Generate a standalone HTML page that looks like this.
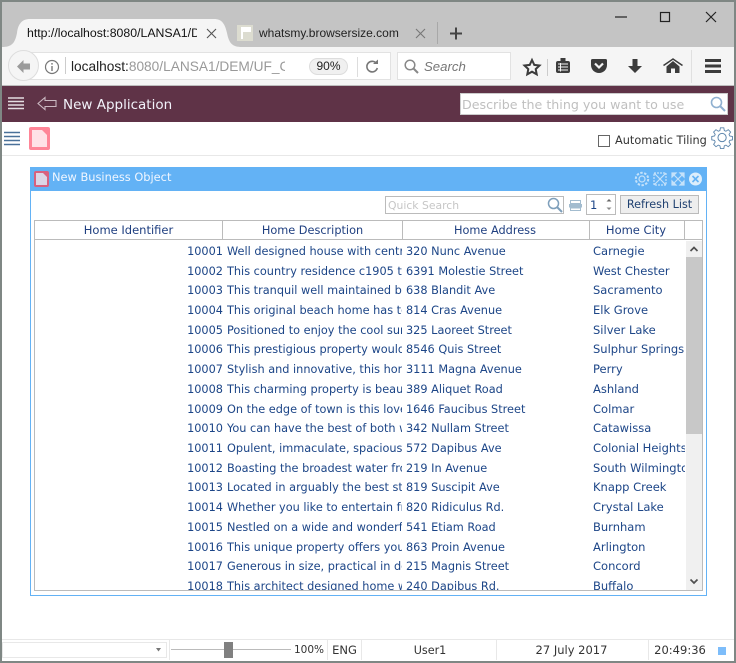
<!DOCTYPE html>
<html><head><meta charset="utf-8"><style>
*{box-sizing:border-box}
html,body{margin:0;padding:0;background:#fff}
#r{position:relative;width:736px;height:663px;overflow:hidden;background:#fff;font-family:"DejaVu Sans",sans-serif;font-size:11.500px}
.a{position:absolute}
.t{position:absolute;white-space:nowrap;overflow:hidden}
svg{position:absolute;overflow:visible}
.row{position:absolute;left:0;height:19px;line-height:19px;color:#1c4587;white-space:nowrap;font-size:11.300px}
.row span{position:absolute;top:0;overflow:hidden;white-space:nowrap}
.row span:last-child{font-size:11.500px}
.h{position:absolute;top:221px;height:19px;line-height:19px;text-align:center;color:#1f3f80;border-right:1px solid #bbb}
.st{position:absolute;top:640px;height:20px;line-height:21px;color:#333;text-align:center}
.sd{position:absolute;top:640px;width:1px;height:20px;background:#e8e8e8}
</style></head><body><div id="r">

<!-- browser chrome -->
<div class="a" style="left:0;top:0;width:736px;height:47px;background:#c4c4c4"></div>
<svg style="left:0;top:0" width="736" height="50">
<path d="M2 47C12 47 15 43 17 33C18 24 22 19 30 19H214C222 19 225 24 227 33C229 43 232 47 242 47Z" fill="#f5f5f5"/>
<rect x="237" y="25" width="16" height="16" fill="#dcdcd0"/><path d="M243 32h8v-5h-10v12h2z" fill="#fff"/>
<path d="M207 29l9 9M216 29l-9 9" stroke="#555" stroke-width="1.100" fill="none"/>
<path d="M416 29l9 9M425 29l-9 9" stroke="#777" stroke-width="1.100" fill="none"/>
<path d="M437.500 22v22" stroke="#a8a8a8"/>
<path d="M450 33.500h12M456 27.500v12" stroke="#444" stroke-width="2" fill="none"/>
<path d="M615 17h12" stroke="#222" stroke-width="1.200"/>
<rect x="660.500" y="12.500" width="9" height="9" fill="none" stroke="#222" stroke-width="1.200"/>
<path d="M706 12l10 10M716 12l-10 10" stroke="#222" stroke-width="1.200" fill="none"/>
</svg>
<div class="t" style="left:27px;top:24px;width:170px;height:18px;line-height:18px;font-family:'Liberation Sans',sans-serif;font-size:12.300px;color:#111">http://localhost:8080/LANSA1/D</div>
<div class="t" style="left:259px;top:24px;width:150px;height:18px;line-height:18px;font-family:'Liberation Sans',sans-serif;font-size:12px;color:#222">whatsmy.browsersize.com</div>

<!-- nav bar -->
<div class="a" style="left:0;top:47px;width:736px;height:39px;background:#f5f5f5;border-bottom:1px solid #bdbdbd"></div>
<div class="a" style="left:22px;top:52px;width:369px;height:28px;background:#fff;border:1px solid #e2e2e2"></div>
<div class="a" style="left:8px;top:50px;width:31px;height:31px;border-radius:50%;background:#f5f5f5;border:1px solid #ddd"></div>
<svg style="left:0;top:47px" width="736" height="39">
<path d="M23.500 13L17 19.500 23.500 26V22.500H30V16.500H23.500z" fill="#9b9b9b"/>
<circle cx="52" cy="20" r="6.500" fill="none" stroke="#777" stroke-width="1.200"/>
<path d="M52 19v5M52 16v1.600" stroke="#777" stroke-width="1.400"/>
<path d="M65.500 10v17" stroke="#ccc"/>
</svg>
<div class="t" style="left:71px;top:57px;width:214px;height:20px;line-height:20px;font-family:'Liberation Sans',sans-serif;font-size:13.700px;color:#999"><span style="color:#222">localhost:</span>8080/LANSA1/DEM/UF_C</div>
<div class="a" style="left:309px;top:58px;width:39px;height:17px;border-radius:9px;background:#f0f0f0;border:1px solid #ddd;text-align:center;line-height:15px;font-family:'Liberation Sans',sans-serif;font-size:12px;color:#222">90%</div>
<div class="a" style="left:357px;top:57px;width:1px;height:20px;background:#ddd"></div>
<svg style="left:364px;top:59px" width="16" height="16"><path d="M12.500 4.500A5.300 5.300 0 1 0 13.300 9" fill="none" stroke="#777" stroke-width="1.600"/><path d="M9 5h5V0.500z" fill="#777"/></svg>
<div class="a" style="left:397px;top:52px;width:114px;height:28px;background:#fff;border:1px solid #e2e2e2"></div>
<svg style="left:404px;top:59px" width="16" height="16"><circle cx="6" cy="6" r="4.800" fill="none" stroke="#888" stroke-width="1.500"/><path d="M9.500 9.500l4.500 4.500" stroke="#888" stroke-width="2"/></svg>
<div class="t" style="left:424px;top:57px;width:70px;height:20px;line-height:20px;font-family:'Liberation Sans',sans-serif;font-style:italic;font-size:13.200px;color:#777">Search</div>
<svg style="left:520px;top:47px" width="216" height="39">
<path d="M12 13l2.300 4.900 5.200.6-3.800 3.600 1 5.200-4.700-2.600-4.700 2.600 1-5.200-3.800-3.600 5.200-.6z" fill="none" stroke="#3c3c3c" stroke-width="2"/>
<path d="M27.500 12v17" stroke="#ccc"/>
<rect x="36" y="14" width="14" height="12" rx="2" fill="#3c3c3c"/><rect x="40.500" y="11" width="5" height="4" fill="#3c3c3c"/>
<path d="M38 17h10M38 20h10M38 23h10" stroke="#f5f5f5" stroke-width="1"/><path d="M40.500 16v8.500" stroke="#f5f5f5"/>
<path d="M72.500 12h13a1.500 1.500 0 0 1 1.500 1.500v4.500c0 4.500-3.500 8-8 8s-8-3.500-8-8v-4.500A1.500 1.500 0 0 1 72.500 12z" fill="#3c3c3c"/>
<path d="M75 16.500l4 4 4-4" fill="none" stroke="#f5f5f5" stroke-width="2.200"/>
<path d="M111.500 12h5v7h4.500l-7 7-7-7h4.500z" fill="#3c3c3c" transform="translate(1 0)"/>
<path d="M146.500 19.500l6.500-5.500 6.500 5.500v6.500h-4.500v-4.500h-4v4.500h-4.500z" fill="#3c3c3c"/>
<path d="M143.500 18.500l9.500-6.500 9.500 6.500" fill="none" stroke="#3c3c3c" stroke-width="1.500"/>
<path d="M171.500 3v33" stroke="#e0e0e0"/>
<path d="M185 13.500h16M185 19h16M185 24.500h16" stroke="#3c3c3c" stroke-width="3"/>
</svg>

<!-- app bar -->
<div class="a" style="left:0;top:86px;width:736px;height:36px;background:#5f3347"></div>
<svg style="left:0;top:86px" width="120" height="36">
<path d="M8 12h16M8 15.500h16M8 19h16M8 22.500h16" stroke="#e4dde1" stroke-width="1.500"/>
<path d="M45 11.500l-7 6 7 6v-3h11v-6h-11z" fill="none" stroke="#cbb9c2" stroke-width="1.100"/>
</svg>
<div class="t" style="left:63px;top:95px;width:130px;height:20px;line-height:20px;font-size:13.500px;color:#f2f2fa">New Application</div>
<div class="a" style="left:460px;top:93px;width:268px;height:22px;background:#fff;border:1px solid #ccc"></div>
<div class="t" style="left:462px;top:95px;width:240px;height:20px;line-height:20px;font-size:12.650px;color:#bfbfbf">Describe the thing you want to use</div>
<svg style="left:710px;top:96px" width="16" height="16"><circle cx="6.500" cy="6.500" r="5" fill="none" stroke="#8fb0d0" stroke-width="1.600"/><path d="M10 10l5 5" stroke="#8fb0d0" stroke-width="2"/></svg>

<!-- toolbar -->
<svg style="left:0;top:122px" width="60" height="34">
<path d="M4 10.500h16M4 14.500h16M4 18.500h16M4 22.500h16" stroke="#4a7199" stroke-width="1.500"/>
<rect x="29" y="5" width="21" height="23" rx="2" fill="#ff8597"/>
<path d="M32 8h10l5 5v12h-15z" fill="#ffe1e6"/>
</svg>
<div class="a" style="left:2px;top:155px;width:732px;height:1px;background:#e8e8e8"></div>
<div class="a" style="left:598px;top:135px;width:12px;height:12px;border:1px solid #666;background:#fff"></div>
<div class="t" style="left:615px;top:132px;width:95px;height:18px;line-height:18px;font-size:11.300px;color:#333">Automatic Tiling</div>
<svg style="left:712px;top:127px" width="22" height="22" viewBox="0 0 24 24"><path d="M10 1.500h4l.6 3.300 1.900.8 2.800-1.900 2.800 2.800-1.900 2.800.8 1.900 3.300.6v4l-3.300.6-.8 1.900 1.900 2.800-2.800 2.800-2.800-1.900-1.900.8-.6 3.300h-4l-.6-3.300-1.900-.8-2.800 1.900-2.800-2.800 1.900-2.800-.8-1.900-3.300-.6v-4l3.300-.6.8-1.900-1.900-2.800 2.800-2.800 2.800 1.900 1.900-.8z" transform="translate(0 -.5) scale(.92)" fill="none" stroke="#5f87ad" stroke-width="1.100"/><circle cx="11" cy="11.500" r="4.500" fill="none" stroke="#5f87ad" stroke-width="1.100"/></svg>

<!-- window -->
<div class="a" style="left:30px;top:167px;width:677px;height:429px;border:1px solid #63b2f5;background:#fff"></div>
<div class="a" style="left:30px;top:167px;width:677px;height:24px;background:#63b2f5"></div>
<svg style="left:30px;top:167px" width="30" height="24"><rect x="4" y="4" width="15" height="16" rx="2" fill="#d8617f"/><path d="M6 6h7l4 4v8h-11z" fill="#dcd6e6"/></svg>
<div class="t" style="left:52px;top:169px;width:130px;height:16px;line-height:16px;font-size:11.400px;color:#f0f6ff">New Business Object</div>
<svg style="left:632px;top:170px" width="72" height="18">
<g fill="none" stroke="#c5e2fa" stroke-width="1.200">
<circle cx="10" cy="9" r="3"/><circle cx="10" cy="9" r="6.200" stroke-dasharray="2.400 1.500" stroke-width="2"/>
<rect x="22" y="3" width="12" height="12" stroke-dasharray="2 1"/><path d="M22 3l12 12M34 3l-12 12"/>
<path d="M40 3h4l-4 4zM52 3h-4l4 4zM40 15h4l-4-4zM52 15h-4l4-4z" fill="#c5e2fa"/><path d="M42 5l8 8M50 5l-8 8"/>
</g>
<circle cx="63.500" cy="9" r="6.500" fill="#dceefc"/><path d="M60.500 6l6 6M66.500 6l-6 6" stroke="#63b2f5" stroke-width="1.600"/>
</svg>

<!-- search row -->
<div class="a" style="left:385px;top:196px;width:179px;height:18px;border:1px solid #bbb;background:#fff"></div>
<div class="t" style="left:388px;top:198px;width:150px;height:16px;line-height:16px;font-size:10.800px;color:#c6c6c6">Quick Search</div>
<svg style="left:547px;top:197px" width="16" height="16"><circle cx="6.500" cy="6.500" r="5" fill="none" stroke="#7e9fbb" stroke-width="1.500"/><path d="M10 10l5 5" stroke="#7e9fbb" stroke-width="2"/></svg>
<svg style="left:569px;top:199px" width="13" height="13"><rect x="1.500" y="1.500" width="10" height="3" fill="none" stroke="#a3bccf"/><rect x="0" y="5" width="13" height="3.500" fill="#a3bccf"/><rect x="1.500" y="9" width="10" height="2.500" fill="none" stroke="#a3bccf"/></svg>
<div class="a" style="left:586px;top:194px;width:30px;height:21px;border:1px solid #bbb;background:#fff"></div>
<div class="t" style="left:590px;top:196px;width:12px;height:18px;line-height:18px;font-size:11.500px;color:#1c4587">1</div>
<svg style="left:604px;top:197px" width="10" height="16"><path d="M2.500 4.500l2.500-2.500 2.500 2.500z" fill="#666"/><path d="M2.500 10.500h5l-2.500 2.500z" fill="#888"/></svg>
<div class="a" style="left:620px;top:195px;width:79px;height:19px;border:1px solid #bbb;background:#eee;text-align:center;line-height:18px;color:#1f4070;font-size:11.200px">Refresh List</div>

<!-- table -->
<div class="a" style="left:34px;top:220px;width:669px;height:371px;border:1px solid #bbb;background:#fff;overflow:hidden"></div>
<div class="a" style="left:35px;top:239px;width:667px;height:1px;background:#bbb"></div>
<div class="h" style="left:35px;width:188px">Home Identifier</div>
<div class="h" style="left:223px;width:180px;font-size:11.300px">Home Description</div>
<div class="h" style="left:403px;width:187px;font-size:11.300px;padding-right:2px">Home Address</div>
<div class="h" style="left:590px;width:95px;padding-right:2px">Home City</div>

<div class="a" style="left:35px;top:241px;width:651px;height:349px;overflow:hidden">
<div class="row" style="top:1px"><span style="left:0;width:188px;text-align:right">10001</span><span style="left:192px;width:175px">Well designed house with central heating</span><span style="left:371px;width:185px">320 Nunc Avenue</span><span style="left:558px;width:92px">Carnegie</span></div>
<div class="row" style="top:20.700px"><span style="left:0;width:188px;text-align:right">10002</span><span style="left:192px;width:175px">This country residence c1905 t</span><span style="left:371px;width:185px">6391 Molestie Street</span><span style="left:558px;width:92px">West Chester</span></div>
<div class="row" style="top:40.400px"><span style="left:0;width:188px;text-align:right">10003</span><span style="left:192px;width:175px">This tranquil well maintained beach</span><span style="left:371px;width:185px">638 Blandit Ave</span><span style="left:558px;width:92px">Sacramento</span></div>
<div class="row" style="top:60.100px"><span style="left:0;width:188px;text-align:right">10004</span><span style="left:192px;width:175px">This original beach home has to be</span><span style="left:371px;width:185px">814 Cras Avenue</span><span style="left:558px;width:92px">Elk Grove</span></div>
<div class="row" style="top:79.800px"><span style="left:0;width:188px;text-align:right">10005</span><span style="left:192px;width:175px">Positioned to enjoy the cool summer</span><span style="left:371px;width:185px">325 Laoreet Street</span><span style="left:558px;width:92px">Silver Lake</span></div>
<div class="row" style="top:99px"><span style="left:0;width:188px;text-align:right">10006</span><span style="left:192px;width:175px">This prestigious property would be</span><span style="left:371px;width:185px">8546 Quis Street</span><span style="left:558px;width:92px">Sulphur Springs</span></div>
<div class="row" style="top:119.200px"><span style="left:0;width:188px;text-align:right">10007</span><span style="left:192px;width:175px">Stylish and innovative, this home is</span><span style="left:371px;width:185px">3111 Magna Avenue</span><span style="left:558px;width:92px">Perry</span></div>
<div class="row" style="top:138.900px"><span style="left:0;width:188px;text-align:right">10008</span><span style="left:192px;width:175px">This charming property is beautiful</span><span style="left:371px;width:185px">389 Aliquet Road</span><span style="left:558px;width:92px">Ashland</span></div>
<div class="row" style="top:158.600px"><span style="left:0;width:188px;text-align:right">10009</span><span style="left:192px;width:175px">On the edge of town is this lovely</span><span style="left:371px;width:185px">1646 Faucibus Street</span><span style="left:558px;width:92px">Colmar</span></div>
<div class="row" style="top:178.300px"><span style="left:0;width:188px;text-align:right">10010</span><span style="left:192px;width:175px">You can have the best of both worlds</span><span style="left:371px;width:185px">342 Nullam Street</span><span style="left:558px;width:92px">Catawissa</span></div>
<div class="row" style="top:198px"><span style="left:0;width:188px;text-align:right">10011</span><span style="left:192px;width:175px">Opulent, immaculate, spacious and</span><span style="left:371px;width:185px">572 Dapibus Ave</span><span style="left:558px;width:92px">Colonial Heights</span></div>
<div class="row" style="top:217.700px"><span style="left:0;width:188px;text-align:right">10012</span><span style="left:192px;width:175px">Boasting the broadest water frontage</span><span style="left:371px;width:185px">219 In Avenue</span><span style="left:558px;width:92px">South Wilmington</span></div>
<div class="row" style="top:237.400px"><span style="left:0;width:188px;text-align:right">10013</span><span style="left:192px;width:175px">Located in arguably the best street</span><span style="left:371px;width:185px">819 Suscipit Ave</span><span style="left:558px;width:92px">Knapp Creek</span></div>
<div class="row" style="top:257.100px"><span style="left:0;width:188px;text-align:right">10014</span><span style="left:192px;width:175px">Whether you like to entertain friends</span><span style="left:371px;width:185px">820 Ridiculus Rd.</span><span style="left:558px;width:92px">Crystal Lake</span></div>
<div class="row" style="top:276.800px"><span style="left:0;width:188px;text-align:right">10015</span><span style="left:192px;width:175px">Nestled on a wide and wonderful block</span><span style="left:371px;width:185px">541 Etiam Road</span><span style="left:558px;width:92px">Burnham</span></div>
<div class="row" style="top:296.500px"><span style="left:0;width:188px;text-align:right">10016</span><span style="left:192px;width:175px">This unique property offers you the</span><span style="left:371px;width:185px">863 Proin Avenue</span><span style="left:558px;width:92px">Arlington</span></div>
<div class="row" style="top:316.200px"><span style="left:0;width:188px;text-align:right">10017</span><span style="left:192px;width:175px">Generous in size, practical in design</span><span style="left:371px;width:185px">215 Magnis Street</span><span style="left:558px;width:92px">Concord</span></div>
<div class="row" style="top:335.900px"><span style="left:0;width:188px;text-align:right">10018</span><span style="left:192px;width:175px">This architect designed home with</span><span style="left:371px;width:185px">240 Dapibus Rd.</span><span style="left:558px;width:92px">Buffalo</span></div>
</div>

<!-- scrollbar -->
<div class="a" style="left:686px;top:241px;width:16px;height:349px;background:#f0f0f0"></div>
<div class="a" style="left:686px;top:257px;width:16px;height:177px;background:#c8c8c8"></div>
<svg style="left:686px;top:241px" width="16" height="349"><path d="M4.500 10l3.500-3.500 3.500 3.500" fill="none" stroke="#505050" stroke-width="1.700"/><path d="M4.500 338.500l3.500 3.500 3.500-3.500" fill="none" stroke="#505050" stroke-width="1.700"/></svg>

<!-- status bar -->
<div class="a" style="left:2px;top:639px;width:732px;height:1px;background:#e8e8e8"></div>
<div class="a" style="left:2px;top:642px;width:165px;height:16px;border:1px solid #e8e8e8;background:#fff"></div>
<svg style="left:155px;top:647px" width="8" height="6"><path d="M1 1h5l-2.500 3.500z" fill="#777"/></svg>
<div class="sd" style="left:169px"></div>
<div class="a" style="left:171px;top:649px;width:120px;height:1px;background:#bbb"></div>
<div class="a" style="left:224px;top:642px;width:9px;height:16px;background:#808080"></div>
<div class="st" style="left:292px;width:34px;font-size:10.500px">100%</div>
<div class="sd" style="left:327px"></div>
<div class="st" style="left:328px;width:33px">ENG</div>
<div class="sd" style="left:361px"></div>
<div class="st" style="left:363px;width:134px;font-size:11.200px">User1</div>
<div class="sd" style="left:496px"></div>
<div class="st" style="left:496px;width:151px">27 July 2017</div>
<div class="sd" style="left:648px"></div>
<div class="st" style="left:649px;width:62px">20:49:36</div>
<div class="a" style="left:718px;top:647px;width:8px;height:8px;background:#7dbdfa"></div>

<!-- window frame -->
<div class="a" style="left:0;top:0;width:736px;height:663px;border:2px solid #7f8784;pointer-events:none"></div>
</div></body></html>
